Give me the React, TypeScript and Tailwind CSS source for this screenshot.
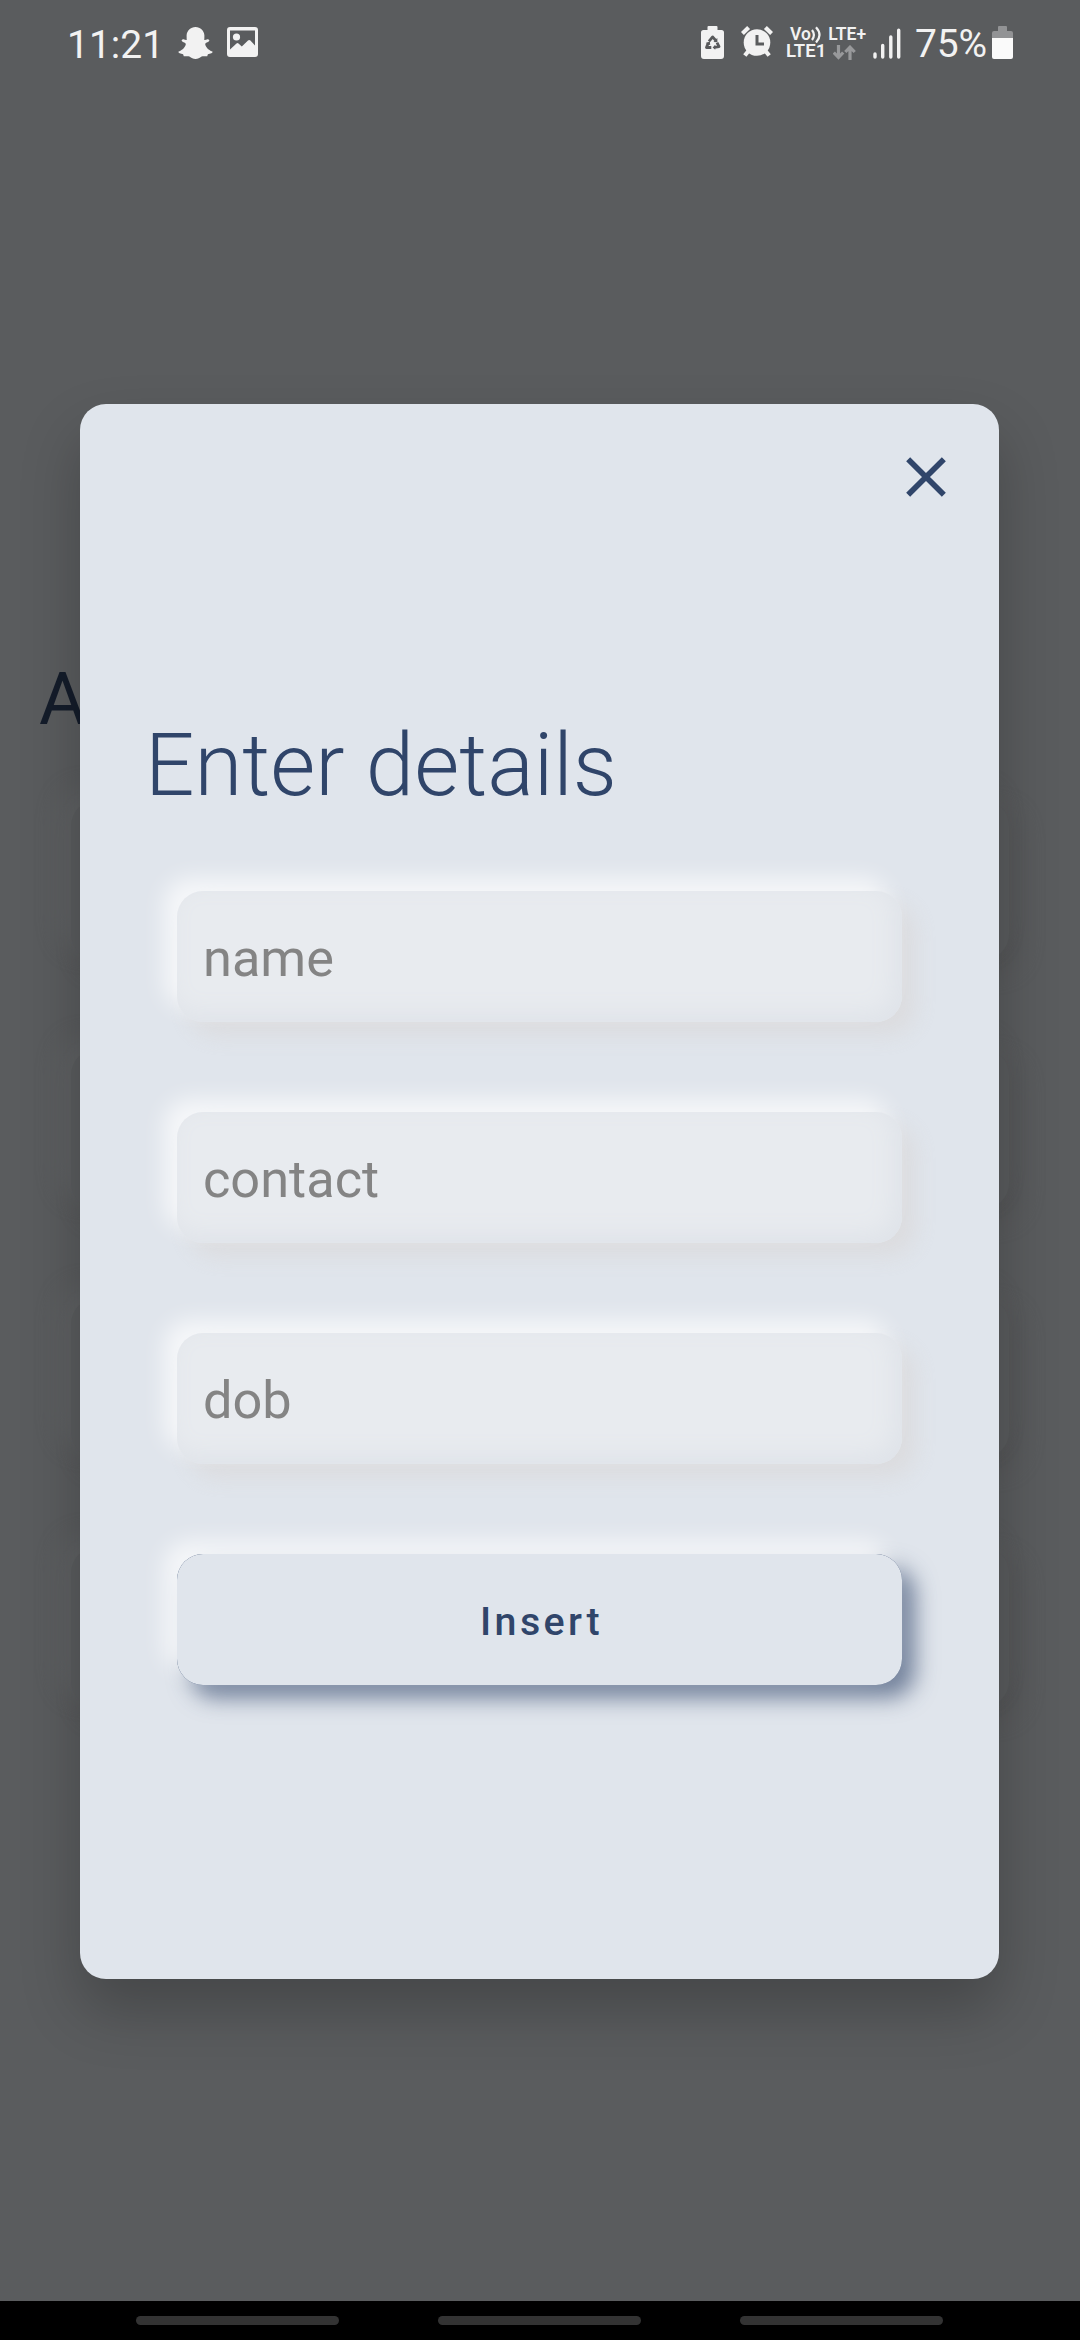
import React from "react";
import { MdClose } from "react-icons/md";

const FIELDS = ["name", "contact", "dob"];

function GhostIcon() {
  return (
    <svg className="ml-[21px] h-[32px] w-[35px] shrink-0" viewBox="0 0 35 32" fill="#f2f2f2">
      <path d="M17.5 0C22.5 0 26.2 3.6 26.4 8.6L26.3 12.9C27.2 13.2 28.4 12.5 29.4 12.2C30.8 12 32 13.200 31 14.300C29.900 15.300 27.600 15.500 27.200 17C27.300 19.600 30.200 22.900 34.400 24.600C34.800 25.200 34.400 25.800 33.400 26.200L29.900 27.200L29.200 29.300C27 29.500 25.300 28.700 23.600 29.600C21.500 30.900 20 32 17.500 32C15 32 13.500 30.900 11.400 29.600C9.700 28.700 8 29.500 5.800 29.300L5.100 27.200L1.600 26.200C.6 25.800 .2 25.200 .6 24.600C4.800 22.900 7.700 19.600 7.800 17C7.400 15.500 5.100 15.300 4 14.300C3 13.200 4.200 12 5.600 12.200C6.600 12.500 7.800 13.200 8.700 12.900L8.600 8.600C8.800 3.600 12.500 0 17.500 0Z" />
    </svg>
  );
}

function PictureIcon() {
  return (
    <svg className="ml-[14px] h-[30px] w-[31px] shrink-0" viewBox="0 0 31 30">
      <path
        fill="#f2f2f2"
        fillRule="evenodd"
        d="M3 0H28A3 3 0 0 1 31 3V27A3 3 0 0 1 28 30H3A3 3 0 0 1 0 27V3A3 3 0 0 1 3 0ZM3 3.500V22.500L9.500 16.500Q10.500 15.700 11.500 16.500L14.800 19.500L21 13.600Q22.200 12.500 23.400 13.600L28 18.400V3.500Z"
      />
      <circle cx="9.500" cy="10" r="3.600" fill="#f2f2f2" />
    </svg>
  );
}

function SaverIcon() {
  return (
    <svg className="h-[33px] w-[23px] shrink-0" viewBox="0 0 23 33">
      <path fill="#f2f2f2" d="M7.500 0H15.500Q16.500 0 16.500 1V4H20.500Q23 4 23 6.500V30Q23 33 20 33H3Q0 33 0 30V6.500Q0 4 2.500 4H6.500V1Q6.500 0 7.500 0Z" />
      <g transform="translate(1.500 0.800) scale(0.880)">
        <g fill="none" stroke="#58595b" strokeWidth="3.200" strokeLinejoin="round">
          <path d="M7.300 16.500L11.500 11.500L15 15.500" />
          <path d="M16.500 18L18.800 22.500L13.500 23.500" />
          <path d="M10 23.500H4.500L6.500 18.500" />
        </g>
        <g fill="#58595b">
          <path d="M12.500 17.200L17 17.500L16.800 12.800Z" />
          <path d="M14.500 20.500L11.500 23.500L14.500 26Z" />
          <path d="M3.600 18.300L8.300 16.600L8.800 21Z" />
        </g>
      </g>
    </svg>
  );
}

function AlarmIcon() {
  return (
    <svg className="ml-[17px] h-[32px] w-[32px] shrink-0" viewBox="0 0 32 32">
      <g stroke="#f2f2f2" strokeWidth="4.200" fill="none">
        <path d="M1.400 7.500L7.600 1.500M30.600 7.500L24.400 1.500M7.500 25L3.800 29.500M24.500 25L28.200 29.500" />
      </g>
      <circle cx="16" cy="16.500" r="13.300" fill="#f2f2f2" />
      <path d="M16 9V18H23" fill="none" stroke="#5a5c5e" strokeWidth="3" />
    </svg>
  );
}

function StatusBar() {
  return (
    <div className="flex h-[86px] items-start pr-[67px] pl-[67px] text-[#f2f2f2]">
      <div className="flex h-[86px] w-[90px] pt-[23px] text-[39px] leading-[44px] whitespace-nowrap">11:21</div>
      <div className="flex pt-[27px]">
        <GhostIcon />
        <PictureIcon />
      </div>
      <div className="ml-auto flex pt-[26px]">
        <SaverIcon />
        <AlarmIcon />
        <div className="ml-[13px] flex w-[81px] flex-col font-semibold">
          <div className="flex h-[16px] justify-between pr-[1px] pl-[4px] text-[17.500px] leading-[17px]">
            <span className="flex">
              Vo
              <svg className="h-[17px] w-[12px]" viewBox="0 0 12 17" fill="none" stroke="#f2f2f2" strokeWidth="2.200">
                <path d="M1 4Q4.800 9 1 14M5 1.200Q12 9 5 16.500" />
              </svg>
            </span>
            <span>LTE+</span>
          </div>
          <div className="flex h-[17px] text-[18.500px] leading-[19px]">
            <span className="w-[47px]">LTE1</span>
            <svg className="mt-[3px] h-[15px] w-[23px]" viewBox="0 0 23 15" fill="none" stroke="#98999b" strokeWidth="3.200">
              <path d="M5.500 0V12M.8 7.500L5.500 12.500L10.200 7.500M17 15V3M12.300 7L17 2.200L21.700 7" />
            </svg>
          </div>
        </div>
        <svg className="mt-[2px] ml-[6px] h-[31px] w-[28px]" viewBox="0 0 28 31" stroke="#f2f2f2" strokeWidth="3.400" strokeLinecap="round">
          <path d="M2 26V29M9.700 17.500V29M17.800 9V29M25.700 2.200V29" />
        </svg>
        <div className="-mt-[4px] ml-[14px] w-[77px] text-[39px] leading-[45px] tracking-[-0.2px]">75%</div>
        <svg className="h-[33px] w-[21px]" viewBox="0 0 21 33">
          <path fill="#929395" d="M7 0H14Q15 0 15 1V5H19Q21 5 21 7V12H0V7Q0 5 2 5H6V1Q6 0 7 0Z" />
          <path fill="#fafafa" d="M0 12H21V31Q21 33 19 33H2Q0 33 0 31Z" />
        </svg>
      </div>
    </div>
  );
}

function PageBehind() {
  return (
    <main className="flex grow flex-col bg-[#5a5c5e]">
      <StatusBar />
      <h1 className="mt-[570px] pl-[39px] text-[72px] leading-[88px] text-[#141c2a]">A</h1>
      <div className="mt-[56px] flex flex-col gap-[89px] px-[71px]">
        {[0, 1, 2, 3].map((card) => (
          <div
            key={card}
            className="h-[160px] rounded-[26px] bg-[#5a5c5e] shadow-[-10px_-10px_22px_#606264,10px_10px_22px_#565759]"
          />
        ))}
      </div>
    </main>
  );
}

function DetailsDialog() {
  return (
    <section className="flex h-[1575px] w-[919px] flex-col rounded-[26px] bg-[#e0e5ec] shadow-[0_31px_60px_rgba(0,0,0,0.23)]">
      <div className="flex justify-end pt-[39px] pr-[39px]">
        <button className="text-[#30456a]">
          <MdClose size={68} />
        </button>
      </div>
      <h2 className="mt-[203px] pl-[65px] text-[87px] leading-[102px] font-light text-[#30456a]">Enter details</h2>
      <form className="mt-[75px] flex flex-col gap-[90px] pr-[97px] pl-[97px]">
        {FIELDS.map((field) => (
          <input
            key={field}
            placeholder={field}
            className="h-[131px] w-full rounded-[26px] bg-[#e8ebef] px-[26px] pt-[2px] text-[52.300px] outline-none placeholder:text-[#848484] placeholder:opacity-100 shadow-[-13px_-13px_22px_rgba(255,255,255,0.7),13px_13px_22px_rgba(217,213,214,0.6),inset_-8px_-8px_24px_#dfe3e9]"
          />
        ))}
        <div className="h-[131px] rounded-[26px] bg-[#30456a] shadow-[-13px_-13px_22px_rgba(255,255,255,0.7),13px_13px_22px_rgba(48,69,106,0.62)]">
          <button
            type="button"
            className="block h-full w-full rounded-[26px] bg-[#e0e5ec] pt-[4px] pl-[4px] text-[39.400px] font-medium tracking-[3.400px] text-[#30456a]"
          >
            Insert
          </button>
        </div>
      </form>
    </section>
  );
}

export default function App() {
  return (
    <div className="relative flex h-[2340px] w-[1080px] flex-col overflow-hidden font-['Roboto',sans-serif]">
      <PageBehind />
      <nav className="flex h-[39px] gap-[99px] bg-black pt-[15px] pl-[136px]">
        {[0, 1, 2].map((pill) => (
          <span key={pill} className="h-[9px] w-[203px] rounded-full bg-[#333]" />
        ))}
      </nav>
      <div className="absolute inset-0 flex items-start pt-[404px] pl-[80px]">
        <DetailsDialog />
      </div>
    </div>
  );
}
